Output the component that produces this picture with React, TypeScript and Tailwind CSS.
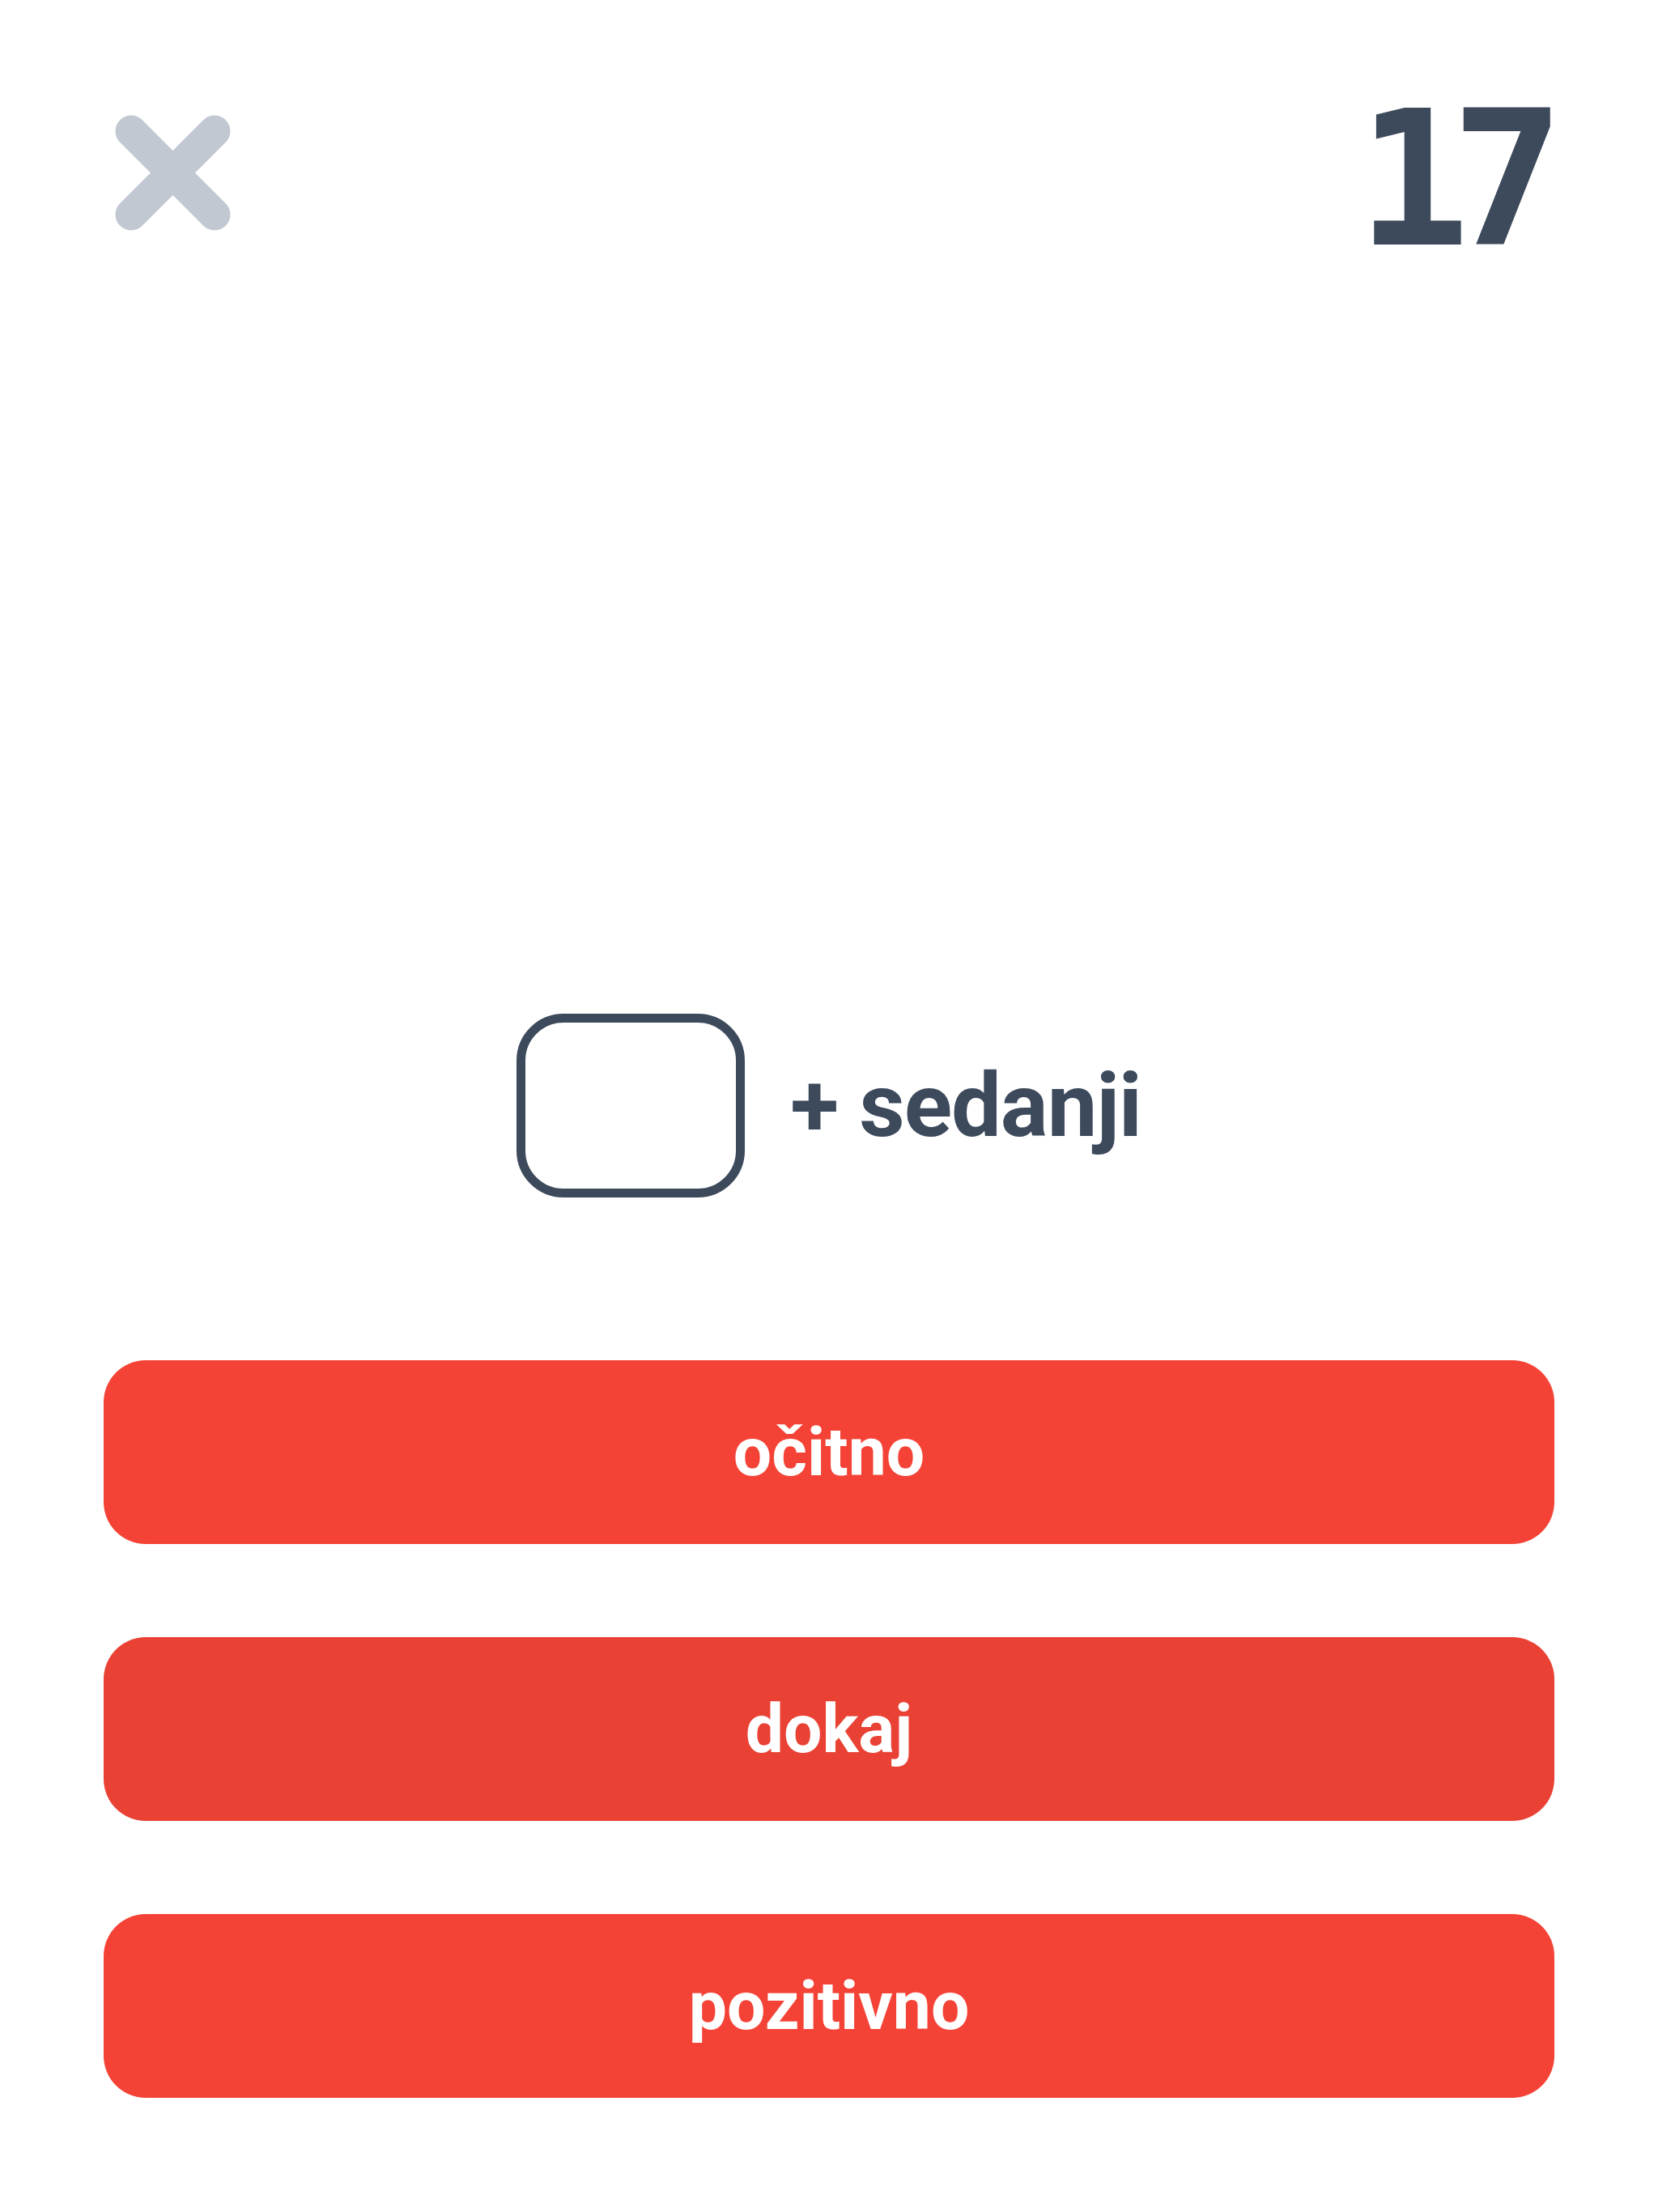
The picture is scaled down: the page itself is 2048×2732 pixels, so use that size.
const choices = [
  { label: "očitno", active: false },
  { label: "dokaj", active: true },
  { label: "pozitivno", active: false },
];

function CloseIcon() {
  return (
    <svg width="143" height="143" viewBox="0 0 143 143" fill="none">
      <path
        d="M20 20 L123 123 M123 20 L20 123"
        stroke="#c2c8d1"
        strokeWidth="39"
        strokeLinecap="round"
      />
    </svg>
  );
}

export default function App() {
  return (
    <div className="w-[2048px] h-[2732px] bg-white flex flex-col font-['Roboto',sans-serif]">
      {/* Top bar */}
      <div className="flex justify-between items-start pl-[142px] pr-[139px] pt-[142px]">
        <CloseIcon />
        <span className="-mt-[36px] font-['DejaVu_Sans_Mono',monospace] font-bold text-[232px] leading-none tracking-[-0.1em] text-[#3d4a5c]">
          17
        </span>
      </div>

      {/* Question */}
      <div className="flex-1 flex items-end justify-center pb-[201px]">
        <div className="flex items-center gap-[56px]">
          <div className="w-[282px] h-[227px] rounded-[58px] border-[11px] border-[#3d4a5c]" />
          <span className="font-bold text-[110px] leading-none text-[#3d4a5c] tracking-[-0.01em]">
            + sedanji
          </span>
        </div>
      </div>

      {/* Answers */}
      <div className="flex flex-col gap-[115px] px-[128px] pb-[141px]">
        {choices.map((c) => (
          <button
            key={c.label}
            className={
              "h-[227px] w-full rounded-[52px] flex items-center justify-center text-white font-bold text-[84px] leading-none " +
              (c.active ? "bg-[#e94235]" : "bg-[#f44336]")
            }
          >
            {c.label}
          </button>
        ))}
      </div>
    </div>
  );
}
